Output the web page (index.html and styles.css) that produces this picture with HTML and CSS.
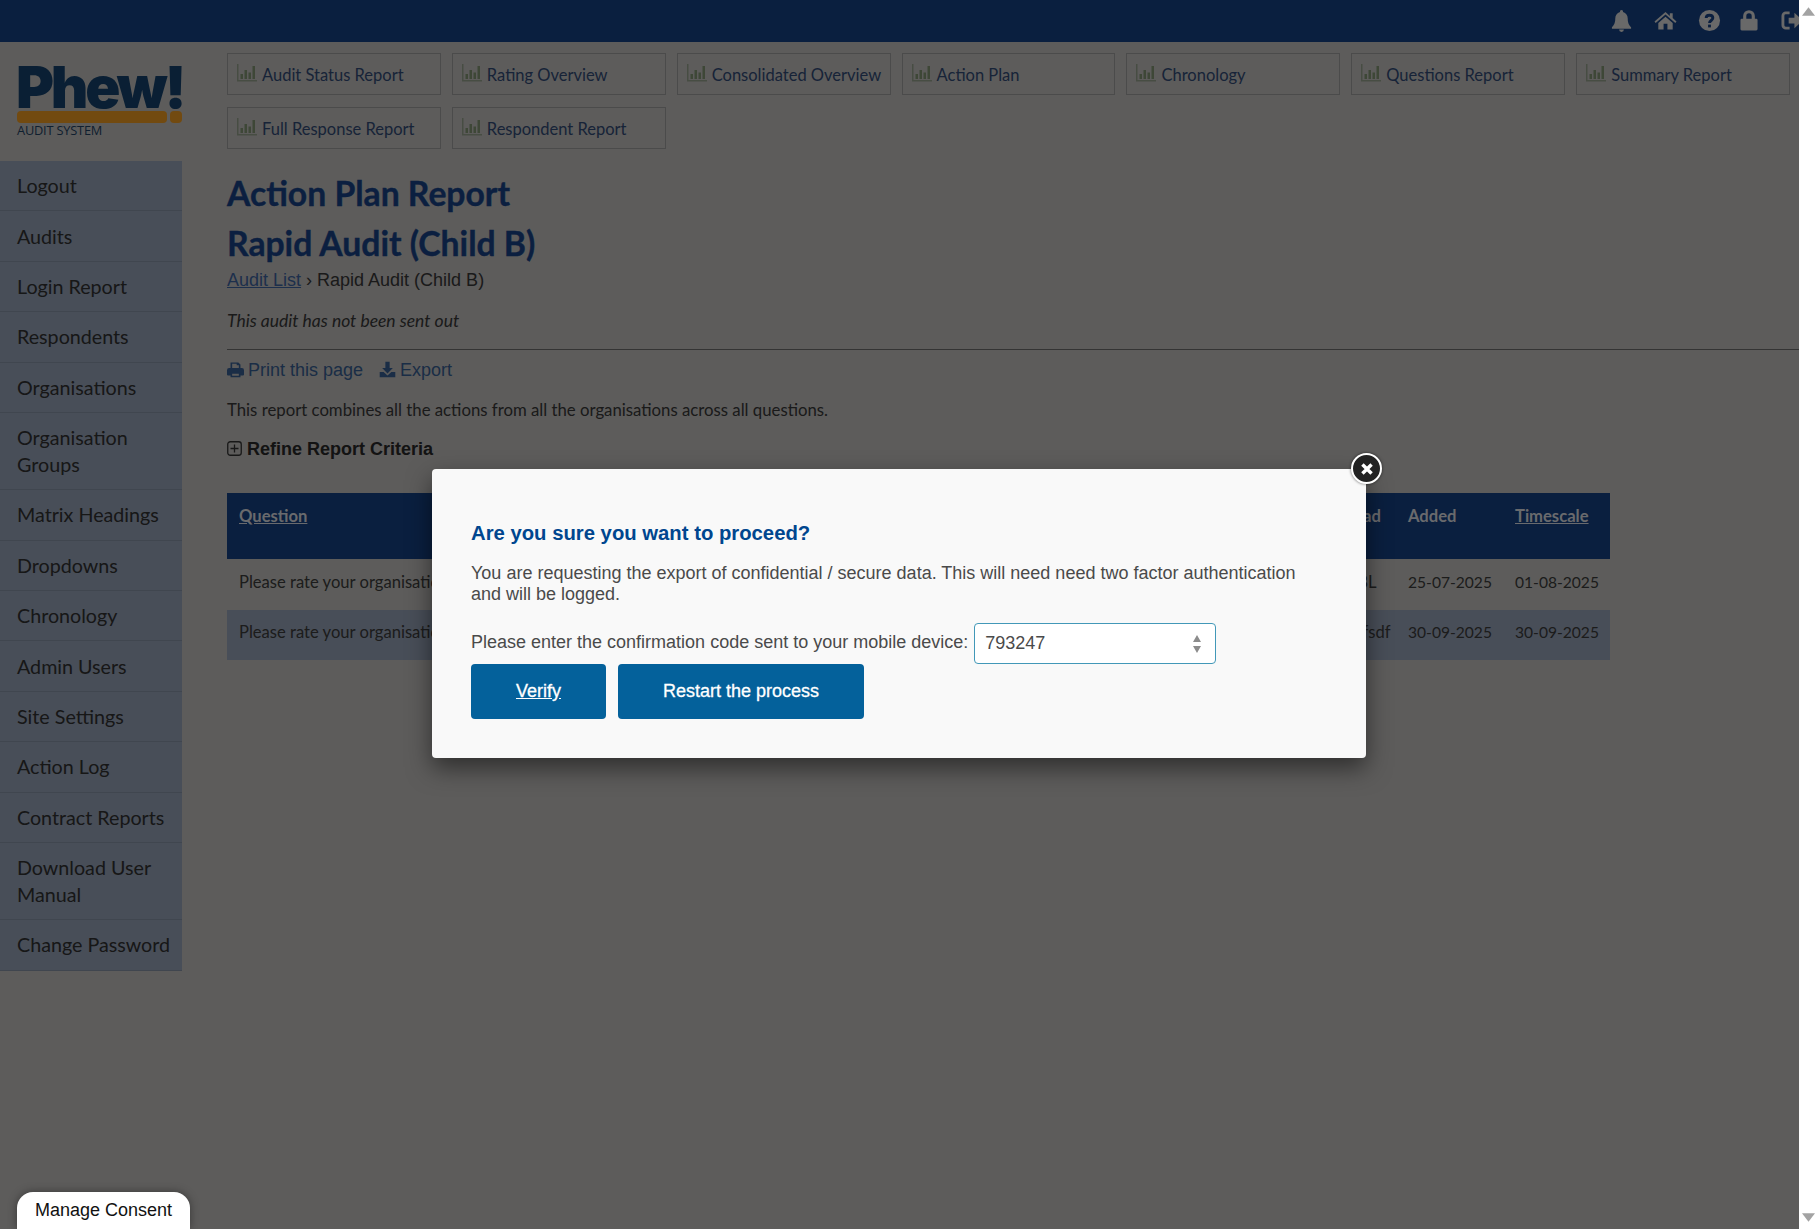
FILE: index.html
```html
<!DOCTYPE html>
<html lang="en">
<head>
    <meta charset="UTF-8">
    <meta name="viewport" content="width=device-width, initial-scale=1.0">
    <title>Action Plan Report</title>
    <link rel="stylesheet" href="styles.css">
</head>
<body>
    <svg class="sprites" width="0" height="0">
        <symbol id="chart" viewBox="0 0 20 18">
            <path d="M0 0h1.500v16H20v1.500H0z" fill="#8e9a86"/>
            <path d="M3.500 10H6v5H3.500zM7.500 6H10v9H7.500zM11.500 8.500H14V15h-2.500zM15.500 2H18v13h-2.500z" fill="#7d8f6e"/>
        </symbol>
    </svg>

    <div class="page">
        <div class="topbar">
            <svg class="top-icon" viewBox="0 0 24 24"><path d="M12 1a1.7 1.7 0 0 0-1.6 2C7.300 3.800 5.500 6.500 5.500 10c0 5-1.500 7-3.500 9v1.500h20V19c-2-2-3.500-4-3.500-9 0-3.500-1.800-6.200-4.900-7A1.700 1.700 0 0 0 12 1zM9.500 21.500a2.500 2.500 0 0 0 5 0z"/></svg>
            <svg class="top-icon" viewBox="0 0 24 24"><path d="M12 3 0.500 13l1.300 1.500L12 5.700l10.200 8.800 1.300-1.500-4-3.500V4.500h-3v2.900zM4.500 14.500V21.500h5.500v-6h4v6h5.500v-7L12 8z"/></svg>
            <svg class="top-icon" viewBox="0 0 24 24"><circle cx="12" cy="12" r="11"/><path class="top-mark" d="M8.500 9.500c0-2 1.500-3 3.500-3s3.500 1.200 3.500 3c0 2.500-3.500 2.500-3.500 5"/><path class="top-dot" d="M10.500 16.300h3v2.900h-3z"/></svg>
            <svg class="top-icon lock" viewBox="0 0 20 24"><path d="M3.500 10V7a6.500 6.500 0 0 1 13 0v3h1.500a1.500 1.500 0 0 1 1.500 1.500v10a1.500 1.500 0 0 1-1.500 1.500H2a1.500 1.500 0 0 1-1.500-1.500v-10A1.500 1.500 0 0 1 2 10zm3.500 0h6V7a3 3 0 0 0-6 0z"/></svg>
            <svg class="top-icon exit" viewBox="0 0 24 24"><path d="M9 4H5a3 3 0 0 0-3 3v10a3 3 0 0 0 3 3h4" class="exit-line"/><path d="M8 9h6V4l9 8-9 8v-5H8z"/></svg>
        </div>

        <div class="layout">
            <div class="sidebar">
                <div class="logo">
                    <div class="logo-name">Phew!</div>
                    <div class="logo-bar"><span class="bar-long"></span><span class="bar-dot"></span></div>
                    <div class="logo-sub">AUDIT SYSTEM</div>
                </div>
                <ul class="menu">
                    <li>Logout</li>
                    <li>Audits</li>
                    <li>Login Report</li>
                    <li>Respondents</li>
                    <li>Organisations</li>
                    <li class="narrow">Organisation Groups</li>
                    <li>Matrix Headings</li>
                    <li>Dropdowns</li>
                    <li>Chronology</li>
                    <li>Admin Users</li>
                    <li>Site Settings</li>
                    <li>Action Log</li>
                    <li>Contract Reports</li>
                    <li class="narrow">Download User Manual</li>
                    <li>Change Password</li>
                </ul>
            </div>

            <div class="content">
                <div class="report-tabs">
                    <a class="report-tab"><svg class="chart"><use href="#chart"/></svg>Audit Status Report</a>
                    <a class="report-tab"><svg class="chart"><use href="#chart"/></svg>Rating Overview</a>
                    <a class="report-tab"><svg class="chart"><use href="#chart"/></svg>Consolidated Overview</a>
                    <a class="report-tab"><svg class="chart"><use href="#chart"/></svg>Action Plan</a>
                    <a class="report-tab"><svg class="chart"><use href="#chart"/></svg>Chronology</a>
                    <a class="report-tab"><svg class="chart"><use href="#chart"/></svg>Questions Report</a>
                    <a class="report-tab"><svg class="chart"><use href="#chart"/></svg>Summary Report</a>
                    <a class="report-tab"><svg class="chart"><use href="#chart"/></svg>Full Response Report</a>
                    <a class="report-tab"><svg class="chart"><use href="#chart"/></svg>Respondent Report</a>
                </div>

                <h1>Action Plan Report</h1>
                <h1>Rapid Audit (Child B)</h1>
                <div class="crumbs"><a href="#">Audit List</a> › Rapid Audit (Child B)</div>
                <p class="not-sent">This audit has not been sent out</p>
                <hr>

                <div class="page-actions">
                    <a class="action">
                        <svg class="action-icon" viewBox="0 0 24 24"><path d="M5 10V2h11l3 3v5h2a3 3 0 0 1 3 3v6a1.500 1.500 0 0 1-1.500 1.500H19V23H5v-2.500H1.500A1.500 1.500 0 0 1 0 19v-6a3 3 0 0 1 3-3zm2.300 0h9.400V6h-3V4H7.300zm0 8v2.700h9.400V18z"/></svg>
                        Print this page
                    </a>
                    <a class="action">
                        <svg class="action-icon" viewBox="0 0 24 24"><path d="M9 1h6v9h4.500L12 17.500 4.500 10H9zM1 15.500h5.500L12 20.500l5.500-5H23V23H1z"/></svg>
                        Export
                    </a>
                </div>

                <p class="intro">This report combines all the actions from all the organisations across all questions.</p>

                <div class="refine">
                    <svg class="refine-icon" viewBox="0 0 15 15"><rect x="0.750" y="0.750" width="13.500" height="13.500" rx="2.500"/><path d="M3.500 7.500h8M7.500 3.500v8"/></svg>
                    Refine Report Criteria
                </div>

                <table class="report-table">
                    <colgroup>
                        <col>
                        <col class="col-lead">
                        <col class="col-date">
                        <col class="col-date">
                    </colgroup>
                    <thead>
                        <tr>
                            <th><a href="#">Question</a></th>
                            <th>Lead</th>
                            <th>Added</th>
                            <th><a href="#">Timescale</a></th>
                        </tr>
                    </thead>
                    <tbody>
                        <tr>
                            <td>Please rate your organisation</td>
                            <td>ABL</td>
                            <td class="date">25-07-2025</td>
                            <td class="date">01-08-2025</td>
                        </tr>
                        <tr class="row-alt">
                            <td>Please rate your organisation</td>
                            <td>sdfsdf</td>
                            <td class="date">30-09-2025</td>
                            <td class="date">30-09-2025</td>
                        </tr>
                    </tbody>
                </table>
            </div>
        </div>

        <div class="overlay">
            <div class="modal">
                <button class="modal-close">
                    <svg viewBox="0 0 14 14"><path d="M3 3l8 8M11 3l-8 8"/></svg>
                </button>
                <h3>Are you sure you want to proceed?</h3>
                <p class="modal-text">You are requesting the export of confidential / secure data. This will need need two factor authentication and will be logged.</p>
                <div class="code-row">
                    <label for="code">Please enter the confirmation code sent to your mobile device:</label>
                    <div class="code-box">
                        <input type="text" id="code" value="793247">
                        <svg class="spinner" viewBox="0 0 10 20"><path d="M5 1l4 7H1zM5 19l4-7H1z"/></svg>
                    </div>
                </div>
                <div class="modal-buttons">
                    <a class="modal-button verify" href="#">Verify</a>
                    <a class="modal-button restart">Restart the process</a>
                </div>
            </div>
        </div>

        <div class="consent">Manage Consent</div>
    </div>

    <div class="scrollbar">
        <svg viewBox="0 0 14 9"><path d="M7 0l7 9H0z"/></svg>
        <svg viewBox="0 0 14 9"><path d="M7 9l7-9H0z"/></svg>
    </div>
</body>
</html>
```

FILE: styles.css
```css
* {
    margin: 0;
    padding: 0;
    box-sizing: border-box;
}

body, html {
    width: 100%;
    height: 100%;
    overflow: hidden;
}

body {
    display: flex;
    background-color: #fff;
    font-family: "Liberation Sans", Arial, sans-serif;
    font-size: 18px;
}

.sprites {
    position: absolute;
}

.page {
    position: relative;
    flex: 1;
    min-width: 0;
    overflow: hidden;
    background-color: #bab8b6;
}

/* top bar */
.topbar {
    display: flex;
    justify-content: flex-end;
    align-items: center;
    gap: 21px;
    height: 42px;
    padding-bottom: 1px;
    background-color: #143e7e;
}

.top-icon {
    width: 23px;
    height: 23px;
    fill: #d2d2d2;
}

.top-icon.lock {
    width: 18px;
    margin: 0 2px 0 -2px;
}

.top-icon.exit {
    flex-shrink: 0;
    margin-right: -5px;
}

.top-mark {
    fill: none;
    stroke: #143e7e;
    stroke-width: 3;
}

.top-dot {
    fill: #143e7e;
}

.exit-line {
    fill: none;
    stroke: #d2d2d2;
    stroke-width: 3;
}

.layout {
    display: flex;
}

/* sidebar */
.sidebar {
    flex: 0 0 182px;
    min-width: 0;
}

.logo {
    height: 119px;
    padding: 21px 0 0 16px;
}

.logo-name {
    height: 48px;
    font-family: Inter, "Open Sans", sans-serif;
    font-size: 58px;
    font-weight: 900;
    line-height: 48px;
    letter-spacing: -3.200px;
    color: #143f68;
    white-space: nowrap;
}

.logo-bar {
    display: flex;
    gap: 3px;
    height: 12px;
    margin-left: 1px;
}

.bar-long {
    width: 150px;
    border-radius: 4px;
    background-color: #e49420;
}

.bar-dot {
    width: 12px;
    border-radius: 4px;
    background-color: #e49420;
}

.logo-sub {
    margin: -2px 0 0 1px;
    font-family: "Open Sans", sans-serif;
    font-size: 12.800px;
    letter-spacing: -0.200px;
    color: #1e3e5e;
}

.menu {
    list-style: none;
}

.menu li {
    padding: 11.200px 8px 11.200px 17px;
    border-bottom: 1px solid #808c9e;
    background-color: #909cb0;
    font-family: Lato, sans-serif;
    font-size: 19.700px;
    line-height: 27px;
    color: #2e2e2e;
}

.menu li.narrow {
    padding-right: 17px;
}

/* main column */
.content {
    flex: 1;
    min-width: 0;
    padding: 11px 0 0 45px;
}

.report-tabs {
    display: grid;
    grid-template-columns: repeat(7, 1fr);
    gap: 12px 11px;
    width: 1563px;
}

.report-tab {
    display: flex;
    align-items: center;
    height: 42px;
    padding: 1px 0 0 9px;
    border: 1px solid #969696;
    font-family: Lato, sans-serif;
    font-size: 16.500px;
    color: #2f4770;
    white-space: nowrap;
}

.chart {
    flex-shrink: 0;
    width: 20px;
    height: 18px;
    margin: -4px 5px 0 0;
}

h1 {
    font-family: Lato, sans-serif;
    font-size: 33.700px;
    font-weight: 700;
    line-height: 49.500px;
    color: #163f80;
    -webkit-text-stroke: 0.400px #163f80;
}

.report-tabs + h1 {
    margin-top: 20px;
}

.crumbs {
    height: 22px;
    margin-top: 1px;
    color: #343434;
    line-height: 22px;
}

.crumbs a {
    color: #3a5f98;
}

.not-sent {
    margin-top: 19px;
    font-family: Lato, sans-serif;
    font-size: 17.500px;
    font-style: italic;
    line-height: 21px;
    color: #343434;
}

hr {
    height: 1px;
    margin-top: 18px;
    border: none;
    background-color: #686868;
}

.page-actions {
    display: flex;
    gap: 16px;
    margin-top: 9px;
    line-height: 22px;
    color: #345a8c;
}

.action {
    display: flex;
    align-items: center;
    gap: 4px;
}

.action-icon {
    width: 17px;
    height: 17px;
    margin-top: -2px;
    fill: currentColor;
}

.intro {
    margin-top: 18px;
    font-family: Lato, sans-serif;
    font-size: 16.750px;
    line-height: 21px;
    color: #343434;
}

.refine {
    display: flex;
    align-items: center;
    gap: 5px;
    margin-top: 18px;
    font-weight: 700;
    line-height: 22px;
    color: #262626;
}

.refine-icon {
    width: 15px;
    height: 15px;
    margin-top: -1px;
    fill: none;
    stroke: #303030;
    stroke-width: 1.300;
}

.report-table {
    width: 1383px;
    margin-top: 33px;
    border-collapse: collapse;
    table-layout: fixed;
    font-family: Lato, sans-serif;
    font-size: 16.600px;
    color: #383838;
}

.col-lead {
    width: 62px;
}

.col-date {
    width: 107px;
}

.report-table th {
    height: 66px;
    padding: 13px 12px 0;
    background-color: #143e7e;
    color: #d2d4da;
    font-weight: 700;
    text-align: left;
    vertical-align: top;
}

.report-table th a {
    color: inherit;
}

.report-table td {
    height: 51px;
    padding: 0 12px 6px;
    white-space: nowrap;
}

.report-table td.date {
    font-size: 15.600px;
}

.row-alt td {
    height: 50px;
    background-color: #909cb0;
}

/* dialog */
.overlay {
    position: absolute;
    top: 0;
    left: 0;
    right: 0;
    bottom: 0;
    display: flex;
    justify-content: center;
    align-items: center;
    padding: 0 1px 2px 0;
    background-color: rgba(0, 0, 0, 0.5);
}

.modal {
    position: relative;
    width: 934px;
    height: 289px;
    padding: 39px;
    border-radius: 4px;
    background-color: #f9f9f9;
    box-shadow: 0 10px 25px rgba(0, 0, 0, 0.5);
    color: #4a4a4a;
}

.modal h3 {
    margin-top: 13px;
    font-size: 20.300px;
    line-height: 24px;
    color: #00468f;
}

.modal-text {
    margin-top: 18px;
    line-height: 21px;
}

.code-row {
    display: flex;
    align-items: flex-start;
    gap: 6px;
    margin-top: 17px;
}

.code-row label {
    padding-top: 10px;
    line-height: 21px;
}

.code-box {
    display: flex;
    align-items: center;
    width: 242px;
    height: 41px;
    margin-top: 1px;
    padding: 0 13px 0 10px;
    border: 1px solid #4298b8;
    border-radius: 4px;
    background-color: #fff;
}

.code-box input {
    flex: 1;
    min-width: 0;
    border: none;
    outline: none;
    font: inherit;
    color: #4a4a4a;
}

.spinner {
    width: 10px;
    height: 20px;
    fill: #8c8c8c;
}

.modal-buttons {
    display: flex;
    gap: 12px;
}

.modal-button {
    display: flex;
    justify-content: center;
    align-items: center;
    height: 55px;
    border-radius: 4px;
    background-color: #04619b;
    color: #fff;
    -webkit-text-stroke: 0.300px #fff;
}

.verify {
    width: 135px;
}

.restart {
    width: 246px;
}

.modal-close {
    position: absolute;
    top: -16px;
    right: -16px;
    display: flex;
    justify-content: center;
    align-items: center;
    width: 31px;
    height: 31px;
    border: 2px solid #fff;
    border-radius: 50%;
    background-color: #222;
    box-shadow: 0 0 3px rgba(0, 0, 0, 0.6);
}

.modal-close svg {
    width: 16px;
    height: 16px;
    fill: none;
    stroke: #fff;
    stroke-width: 3;
}

/* consent tab and page scrollbar */
.consent {
    position: absolute;
    left: 17px;
    bottom: 0;
    width: 173px;
    height: 37px;
    padding-top: 8px;
    border-radius: 16px 16px 0 0;
    background-color: #fff;
    box-shadow: 0 0 10px rgba(0, 0, 0, 0.4);
    color: #111;
    line-height: 21px;
    text-align: center;
}

.scrollbar {
    display: flex;
    flex-direction: column;
    justify-content: space-between;
    flex: 0 0 19px;
    padding: 7px 3px;
    background-color: #fff;
}

.scrollbar svg {
    width: 13px;
    height: 9px;
    fill: #a3a3a3;
}
```
